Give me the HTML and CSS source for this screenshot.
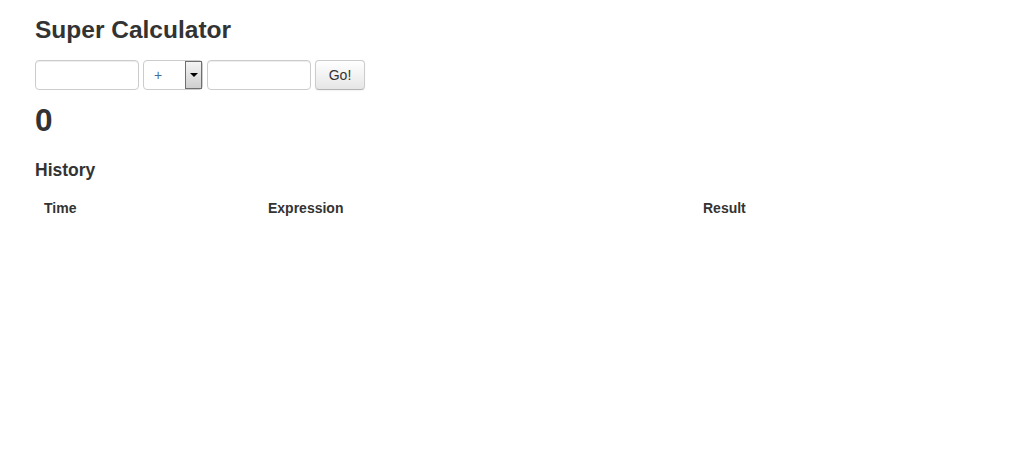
FILE: index.html
```html
<!DOCTYPE html>
<html>
<head>
<meta charset="utf-8">
<title>Super Calculator</title>
<link rel="stylesheet" href="styles.css">
</head>
<body>
<div class="container">
  <h3 class="title">Super Calculator</h3>
  <form class="calc-form">
    <input class="num-input" type="text">
    <span class="select-wrap">
      <select class="op-select">
        <option>+</option>
        <option>-</option>
        <option>*</option>
        <option>/</option>
      </select>
      <span class="select-arrow"><span class="tri"></span></span>
    </span>
    <input class="num-input" type="text">
    <button class="go-btn" type="button">Go!</button>
  </form>
  <h2 class="result">0</h2>
  <h4 class="history-title">History</h4>
  <table class="history-table">
    <thead>
      <tr>
        <th class="col-time">Time</th>
        <th class="col-expr">Expression</th>
        <th class="col-result">Result</th>
      </tr>
    </thead>
    <tbody></tbody>
  </table>
</div>
</body>
</html>
```

FILE: styles.css
```css
html, body {
  margin: 0;
  padding: 0;
  background: #ffffff;
}
body {
  font-family: "Liberation Sans", Arial, Helvetica, sans-serif;
  font-size: 14px;
  line-height: 20px;
  color: #333333;
}
.container {
  width: 940px;
  margin: 0 auto;
}
.title {
  margin: 10px 0;
  font-size: 24.5px;
  line-height: 40px;
  font-weight: bold;
}
.calc-form {
  display: flex;
  align-items: center;
  gap: 4px;
  margin: 0;
  height: 30px;
}
.num-input {
  box-sizing: border-box;
  width: 104px;
  height: 30px;
  padding: 4px 6px;
  border: 1px solid #cccccc;
  border-radius: 4px;
  box-shadow: inset 0 1px 1px rgba(0,0,0,0.075);
  font-family: inherit;
  font-size: 14px;
  color: #555555;
  outline: none;
}
.select-wrap {
  position: relative;
  display: block;
  width: 60px;
  height: 30px;
}
.op-select {
  -webkit-appearance: none;
  appearance: none;
  box-sizing: border-box;
  width: 60px;
  height: 30px;
  padding: 0 0 0 10px;
  border: 1px solid #cccccc;
  border-radius: 4px;
  background: #ffffff;
  font-family: inherit;
  font-size: 14px;
  color: #3f6ea3;
  outline: none;
}
.select-arrow {
  position: absolute;
  top: 1px;
  right: 1px;
  box-sizing: border-box;
  width: 17px;
  height: 28px;
  border: 1px solid #6f6f6f;
  background: linear-gradient(to bottom, #f4f4f4 0%, #e2e2e2 50%, #cfcfcf 100%);
  display: flex;
  align-items: center;
  justify-content: center;
  pointer-events: none;
}
.tri {
  width: 0;
  height: 0;
  border-left: 4px solid transparent;
  border-right: 4px solid transparent;
  border-top: 4px solid #000000;
}
.go-btn {
  box-sizing: border-box;
  width: 50px;
  height: 30px;
  padding: 4px 10px;
  border: 1px solid #cccccc;
  border-bottom-color: #b3b3b3;
  border-radius: 4px;
  background: linear-gradient(to bottom, #ffffff, #e6e6e6);
  box-shadow: inset 0 1px 0 rgba(255,255,255,0.2), 0 1px 2px rgba(0,0,0,0.05);
  font-family: inherit;
  font-size: 14px;
  line-height: 20px;
  color: #333333;
}
.result {
  margin: 10px 0 20px;
  font-size: 31.5px;
  line-height: 40px;
  font-weight: bold;
}
.history-title {
  margin: 0 0 10px;
  font-size: 17.5px;
  line-height: 20px;
  font-weight: bold;
}
.history-table {
  width: 100%;
  border-collapse: collapse;
  border-spacing: 0;
  margin-bottom: 20px;
}
.history-table th {
  padding: 8px 8px 8px 9px;
  text-align: left;
  font-weight: bold;
  line-height: 20px;
  vertical-align: bottom;
}
.col-time { width: 207px; }
.col-expr { width: 418px; }
```
